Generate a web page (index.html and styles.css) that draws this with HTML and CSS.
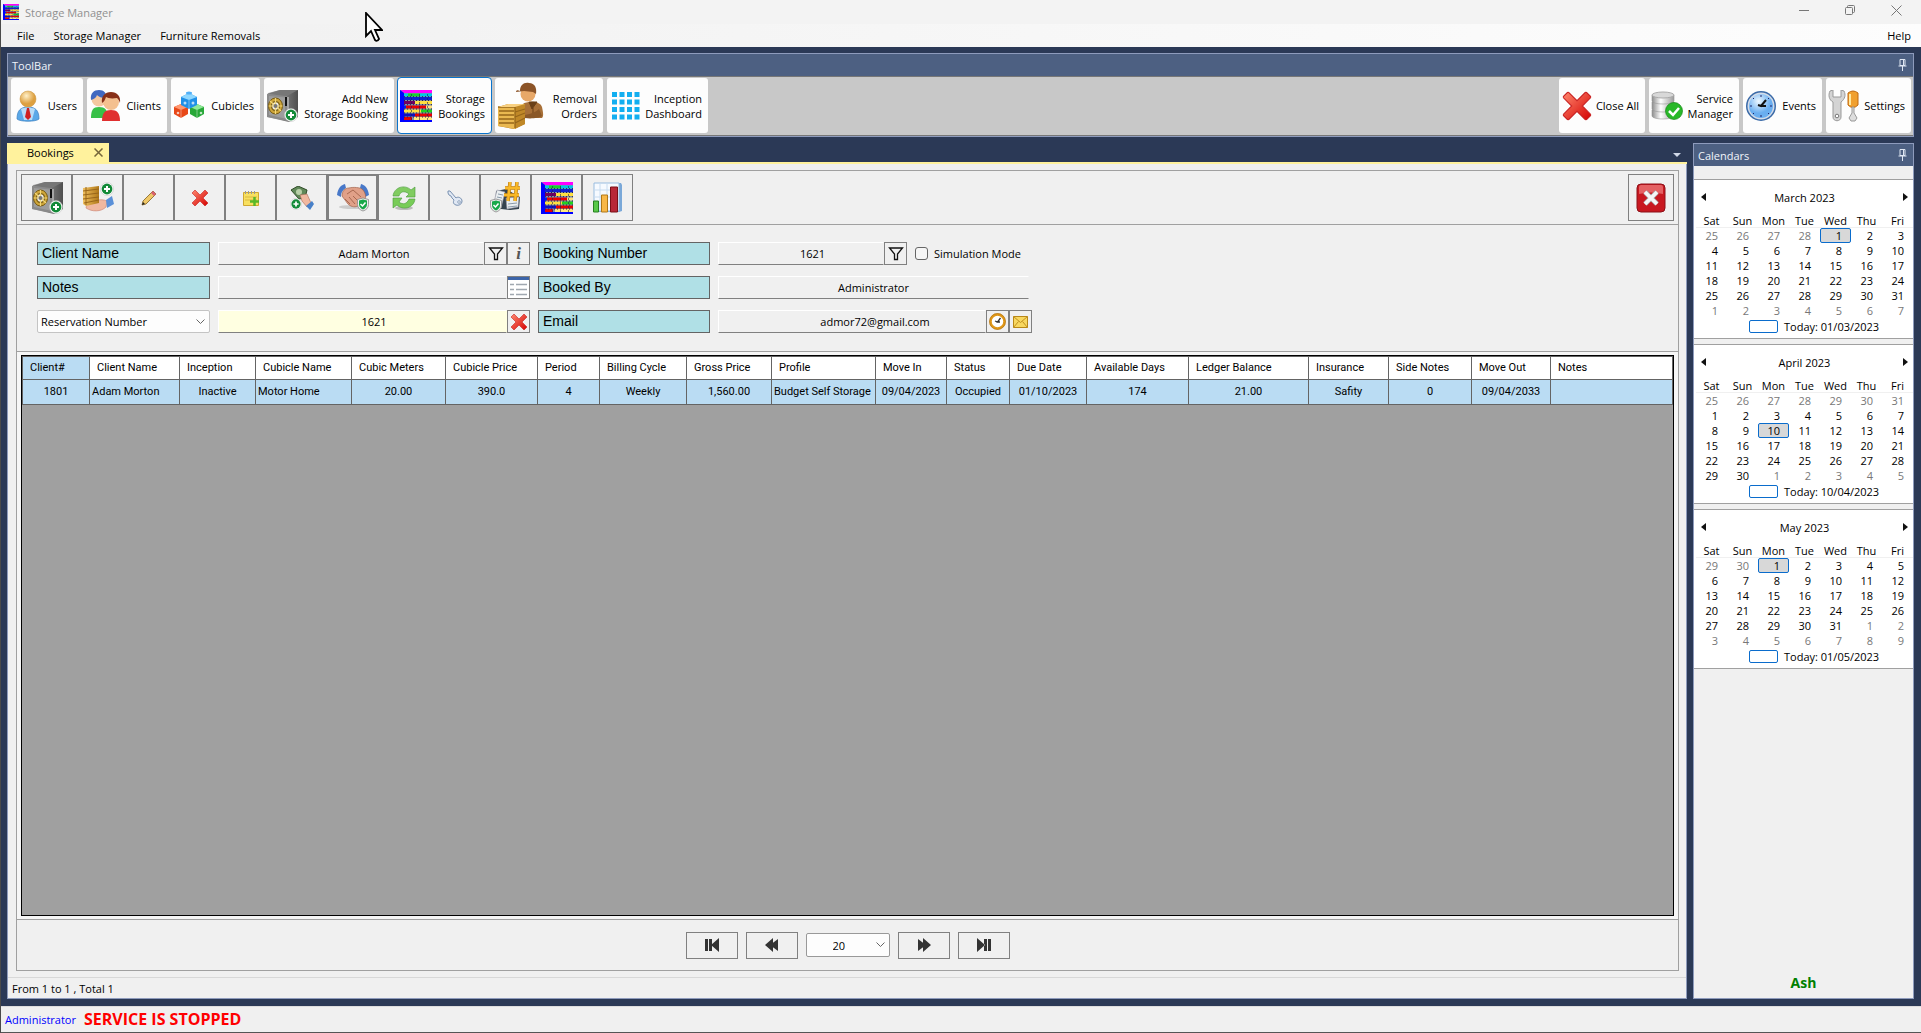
FILE: index.html
```html
<!DOCTYPE html>
<html lang="en">
<head>
<meta charset="utf-8">
<title>Storage Manager</title>
<link rel="stylesheet" href="styles.css">
</head>
<body>
<svg class="defs" aria-hidden="true">
  <defs>
    <linearGradient id="steel" x1="0" x2="1"><stop offset="0" stop-color="#b5b5b5"/><stop offset="1" stop-color="#4e4e4e"/></linearGradient>
    <linearGradient id="redx" x1="0" y1="0" x2="1" y2="1"><stop offset="0" stop-color="#ff8a70"/><stop offset="1" stop-color="#d40000"/></linearGradient>
    <linearGradient id="crate" x1="0" x2="1"><stop offset="0" stop-color="#f0c060"/><stop offset="1" stop-color="#b07818"/></linearGradient>
    <linearGradient id="silver" x1="0" x2="1"><stop offset="0" stop-color="#8c8c8c"/><stop offset=".4" stop-color="#fff"/><stop offset="1" stop-color="#9a9a9a"/></linearGradient>
    <radialGradient id="skin" cx=".4" cy=".3"><stop offset="0" stop-color="#fff0c8"/><stop offset="1" stop-color="#dda040"/></radialGradient>
    <radialGradient id="sky" cx=".4" cy=".3"><stop offset="0" stop-color="#eef8ff"/><stop offset="1" stop-color="#6aaef0"/></radialGradient>
    <symbol id="plus" viewBox="0 0 14 14"><circle cx="7" cy="7" r="6.500" fill="#fff" stroke="#bbb" stroke-width=".5"/><circle cx="7" cy="7" r="5.400" fill="#128a38"/><path d="M7 4v6M4 7h6" stroke="#fff" stroke-width="2"/></symbol>
    <symbol id="shield" viewBox="0 0 12 14"><path d="M6 .5 11.500 2v5c0 3.500-2.500 5.500-5.500 6.500C3 12.500.5 10.500.5 7V2z" fill="#eee" stroke="#888" stroke-width=".8"/><path d="M6 2l4 1v4c0 2.500-2 4-4 5-2-1-4-2.500-4-5V3z" fill="#18a848"/><path d="M3.500 6.500l2 2 3-3.500" stroke="#fff" stroke-width="1.500" fill="none"/></symbol>
    <symbol id="safe" viewBox="0 0 32 32"><path d="M2 3 14 0h18v27l-9 5L1 27z" fill="url(#steel)"/><path d="M1 4 21 6v25L1 27z" fill="#8a8a8a"/><path d="M1 4 14 0h18L21 6z" fill="#777"/><path d="M3 6l16 1.500v21L3 25z" fill="#9d9d9d"/><path d="M20 7v9" stroke="#111" stroke-width="2"/><path d="M22 7v22" stroke="#ddd" stroke-width="1"/><ellipse cx="9.500" cy="16" rx="7" ry="8" fill="#cfa63a" stroke="#765a12"/><ellipse cx="9.500" cy="16" rx="4" ry="4.500" fill="#eee" stroke="#83661a" stroke-width="1.500"/><path d="M9.500 8v16M2.500 16h14M4 11l11 10" stroke="#f3d878" stroke-width="1.200"/><circle cx="9.500" cy="16" r="2" fill="#777"/><use href="#plus" x="18" y="18" width="14" height="14"/></symbol>
    <symbol id="abacus" viewBox="0 0 32 32"><path fill="#8090a8" d="M0 0h32v32H0z"/>
      <g stroke-width="3" fill="none"><path stroke="#00c8e8" d="M4 5h4M20 5h12"/><path stroke="#18d030" d="M8 5h12"/><path stroke="#1020d0" d="M4 8.500h28"/><path stroke="#700060" d="M4 12.500h11"/><path stroke="#ffe040" d="M15 12.500h17"/><path stroke="#0020e0" d="M4 17h2"/><path stroke="#e80000" d="M6 17h20"/><path stroke="#ffe080" d="M26 17h6"/><path stroke="#ffe040" d="M4 21h17"/><path stroke="#20d020" d="M21 21h11"/><path stroke="#1010c0" d="M4 25h11"/><path stroke="#e80000" d="M15 25h17"/><path stroke="#e80000" d="M4 28.500h8"/><path stroke="#ffe880" d="M14 28.500h18"/></g><path d="M4 6.700h28M4 10.500h28M4 14.700h28M4 19h28M4 23h28M4 27h28" stroke="#202050" stroke-width="1" stroke-dasharray="1 2"/><path d="M11.500 4v26M19.500 4v26M27.500 4v26" stroke="#202050" stroke-width=".6" stroke-dasharray="2 2"/><path fill="#f0f" d="M1 0h31v3H4z"/><path fill="#00f" d="M0 0l4 3v27h28v2H0z"/></symbol>
    <symbol id="filter" viewBox="0 0 16 16"><path d="M1.500 2h13l-5 6v5.500h-3V8z" fill="none" stroke="#111" stroke-width="1.300"/></symbol>
    <symbol id="pin" viewBox="0 0 9 12"><path d="M2 .5h5v6H2zM5.500.5v6M.5 7h8M4.500 7v5" fill="none" stroke="#dfe6f2"/></symbol>
    <symbol id="xmark" viewBox="0 0 16 16"><path d="M3 0l5 5 5-5 3 3-5 5 5 5-3 3-5-5-5 5-3-3 5-5-5-5z" fill="url(#redx)" stroke="#c82020" stroke-width=".6"/></symbol>
    <symbol id="prev" viewBox="0 0 5 8"><path d="M5 0v8L0 4z" fill="#111"/></symbol>
    <symbol id="next" viewBox="0 0 5 8"><path d="M0 0v8l5-4z" fill="#111"/></symbol>
  </defs>
</svg>

<div class="app">
  <header class="titlebar">
    <svg class="app-icon" width="16" height="16"><use href="#abacus"/></svg>
    <span class="app-title">Storage Manager</span>
    <div class="window-controls">
      <button aria-label="Minimize"><svg width="11" height="11"><path d="M0 5.500h10" stroke="#777"/></svg></button>
      <button aria-label="Restore"><svg width="11" height="11" fill="none" stroke="#777"><rect x=".5" y="2.500" width="7" height="7" rx="1"/><path d="M2.500 2.500v-1q0-1 1-1h5q1 0 1 1v5q0 1-1 1h-1"/></svg></button>
      <button aria-label="Close"><svg width="11" height="11"><path d="M.5.5l10 10M10.500.5l-10 10" stroke="#777"/></svg></button>
    </div>
  </header>
  <nav class="menubar">
    <a href="#">File</a><a href="#">Storage Manager</a><a href="#">Furniture Removals</a><a href="#" class="menu-help">Help</a>
  </nav>

  <main class="workspace">
    <section class="panel toolbar-panel">
      <h2 class="panel-title">ToolBar <svg width="9" height="12"><use href="#pin"/></svg></h2>
      <div class="toolbar">
        <button class="tool w-72"><svg width="30" height="32" viewBox="0 0 30 32"><path d="M4 29c0-8 3-12 11-12s11 4 11 12c-3 3-19 3-22 0z" fill="#5aa8e8" stroke="#3c80c0" stroke-width=".7"/><path d="M8 19c4-2 10-2 14 0l-3 11h-8z" fill="#b8dcf8"/><path d="M14 18h2l2 9-3 3-3-3z" fill="#d02020"/><circle cx="15" cy="9" r="8" fill="url(#skin)" stroke="#c89038" stroke-width=".5"/></svg><span>Users</span></button>
        <button class="tool w-80"><svg width="32" height="32" viewBox="0 0 32 32"><path d="M2 28c0-8 2-11 8-11s9 3 9 11z" fill="#38c048"/><circle cx="10" cy="9" r="7.500" fill="#f4c8a0"/><path d="M2 10C1 3 5 0 10 0s8 3 7 8c-5 0-7-1-9-3-1 3-3 4-6 5z" fill="#4068c0"/><path d="M13 31c0-8 3-11 9-11s9 3 9 11z" fill="#e03030"/><circle cx="22" cy="12" r="8" fill="#f4c090"/><path d="M13 13c-1-7 3-11 9-11s10 4 9 11c-1-3-2-4-3-5-6 1-9 0-11-1-1 3-2 5-4 6z" fill="#883018"/></svg><span>Clients</span></button>
        <button class="tool w-89"><svg width="32" height="32" viewBox="0 0 32 32"><path d="M1 17l7-3 7 3v7l-7 4-7-4z" fill="#e84818"/><path d="M1 17l7 3 7-3-7-3z" fill="#ff9870"/><path d="M17 17l7-3 7 3v7l-7 4-7-4z" fill="#28a838"/><path d="M17 17l7 3 7-3-7-3z" fill="#90e898"/><path d="M8 7l8-4 8 4v8l-8 4-8-4z" fill="#2090e8"/><path d="M8 7l8 3 8-3-8-4z" fill="#90d8ff"/><path d="M16 10v9M8 20v8M24 20v8" stroke="#fff" stroke-opacity=".4"/><g fill="#fff" opacity=".7"><circle cx="12" cy="13" r="1.500"/><circle cx="20" cy="13" r="1.500"/><circle cx="5" cy="23" r="1.300"/><circle cx="28" cy="23" r="1.300"/></g><ellipse cx="16" cy="3" rx="3" ry="1.500" fill="#50b0f8"/></svg><span>Cubicles</span></button>
        <button class="tool w-130"><svg width="32" height="32"><use href="#safe"/></svg><span>Add New<br>Storage Booking</span></button>
        <button class="tool w-93 is-active"><svg width="32" height="32"><use href="#abacus"/></svg><span>Storage<br>Bookings</span></button>
        <button class="tool w-108"><svg width="48" height="48" viewBox="0 0 48 48"><path d="M26 22c3-3 17-4 19 3 1 5 2 9 0 11H26z" fill="#a87038"/><path d="M32 20l3 7 5-7zM36 26v9" fill="#6a4018" stroke="#6a4018"/><path d="M42 27c-3 3-8 5-14 6v3c6 1 14 0 17-2z" fill="#8a5828"/><circle cx="31" cy="12" r="7.500" fill="#e8a868"/><path d="M23 9c0-6 4-9 9-8 6 0 8 5 7 11l-3-2-9-1-8 1c0-2 2-2 4-1z" fill="#8c5428"/><path d="M1 25l10-3h17v20l-11 5-16-3z" fill="#b87c20"/><path d="M1 25h17v22L1 44z" fill="#eab850"/><path d="M18 25l10-3v20l-10 5z" fill="#c08828"/><path d="M1 25h17v21M2 29h15M2 33h15M2 37h15M2 41h15M18 30l10-3M18 35l10-4M18 41l10-5" stroke="#96661a" fill="none" stroke-width="1.300"/><path d="M1 25l10-3h17l-10 3z" fill="#f8d080"/></svg><span>Removal<br>Orders</span></button>
        <button class="tool w-101"><svg width="32" height="32" viewBox="0 0 32 32"><path d="M5.500 2v28M13 2v28M20.500 2v28M28 2v28" stroke="#12aef0" stroke-width="5" stroke-dasharray="5 2.500"/></svg><span>Inception<br>Dashboard</span></button>
        <div class="tool-spacer"></div>
        <button class="tool w-86"><svg width="32" height="32" viewBox="-1 -1 18 18"><use href="#xmark" width="16" height="16"/></svg><span>Close All</span></button>
        <button class="tool w-90"><svg width="32" height="32" viewBox="0 0 32 32"><g fill="url(#silver)" stroke="#999" stroke-width=".6"><path d="M1 20v6c0 4 22 4 22 0v-6z"/><path d="M1 12v7c0 4 22 4 22 0v-7z"/><path d="M1 5v6c0 4 22 4 22 0V5z"/></g><ellipse cx="12" cy="5" rx="11" ry="3" fill="#d8d8d8" stroke="#aaa"/><circle cx="23" cy="21" r="8.500" fill="#28b828" stroke="#188818" stroke-width=".7"/><path d="M18 21l4 4 6-7" fill="none" stroke="#fff" stroke-width="2.500"/></svg><span>Service<br>Manager</span></button>
        <button class="tool w-79"><svg width="32" height="32" viewBox="0 0 32 32"><circle cx="16" cy="16" r="15" fill="#3a6aa8"/><circle cx="16" cy="16" r="13.500" fill="#d4dce8"/><circle cx="16" cy="16" r="12" fill="url(#sky)"/><path d="M16 5v2M16 25v2M5 16h2M25 16h2M8 8l1 1M24 24l-1-1M8 24l1-1M24 8l-1 1" stroke="#226"/><path d="M21 10l-5 6-3-1M15 16h6" stroke="#111" stroke-width="2" fill="none"/></svg><span>Events</span></button>
        <button class="tool w-85"><svg width="32" height="32" viewBox="0 0 32 32"><path d="M2 1c-2 4-1 9 3 11v15c0 5 8 5 8 0V12c4-3 5-7 3-11l-3-1v7H5V0z" fill="#d4d4d4" stroke="#999"/><circle cx="9" cy="26" r="1.800" fill="#fff" stroke="#777"/><path d="M20 3q5-4 10 0v12q-5 5-10 0z" fill="#f0a030" stroke="#c06810"/><path d="M22 4v11" stroke="#ffe8a0" stroke-width="2"/><path d="M24 17h2v6l3 5-2 3h-4l-2-3 3-5z" fill="#ddd" stroke="#999"/></svg><span>Settings</span></button>
      </div>
    </section>

    <div class="work-row">
      <section class="document">
        <div class="tabstrip">
          <div class="tab">Bookings <button aria-label="Close tab"><svg width="9" height="9"><path d="M.5.5l8 8M8.500.5l-8 8" stroke="#75663a" stroke-width="1.500"/></svg></button></div>
          <button class="tab-menu" aria-label="Open documents"><svg width="8" height="4"><path d="M0 0h8L4 4z" fill="#d0d8e8"/></svg></button>
        </div>
        <div class="document-body">
          <div class="group">
            <div class="actions">
              <button class="action" aria-label="New storage booking"><svg width="32" height="32"><use href="#safe"/></svg></button>
              <button class="action" aria-label="New removal order"><svg width="32" height="32" viewBox="0 0 32 32"><path d="M5 21c5-2 14-5 20-2l-1 6c-5 5-14 5-20 1z" fill="#f0b8a0" stroke="#c88070" stroke-width=".6"/><path d="M24 18l6-4 2 8-7 4z" fill="#5a90d8"/><path d="M1 6l16-2v17l-13 3-3-2z" fill="url(#crate)"/><path d="M1 9l16-2M1 13l16-2M1 17l16-2M2 21l15-3M4 5v18" stroke="#98661a" fill="none"/><use href="#plus" x="18" y="0" width="14" height="14"/></svg></button>
              <button class="action" aria-label="Edit"><svg width="16" height="16" viewBox="0 0 16 16"><path d="M1 15l1-4L12 1l3 3L5 14z" fill="#f0c868" stroke="#806020" stroke-width=".8"/><path d="M12 1l3 3-2 2-3-3z" fill="#d86070"/><path d="M1 15l1-3 2 2z" fill="#222"/></svg></button>
              <button class="action" aria-label="Delete"><svg width="16" height="16"><use href="#xmark"/></svg></button>
              <button class="action" aria-label="Add note"><svg width="16" height="16" viewBox="0 0 16 16"><path d="M.5 2.500h15v13H.5z" fill="#f8e060" stroke="#d0a830"/><path d="M2 7h12M2 10h12" stroke="#d8b840"/><path d="M2.500 1v3M5.500 1v3M8.500 1v3M11.500 1v3" stroke="#999"/><path d="M11.500 7v9M7 11.500h9" stroke="#58b828" stroke-width="2.500"/></svg></button>
              <button class="action" aria-label="Add payment"><svg width="24" height="24" viewBox="0 0 24 24"><path d="M1 4l7-4 9 4-2 8-6 1z" fill="#608858" stroke="#304c28"/><circle cx="9" cy="6" r="3" fill="#b8d0a8"/><path d="M10 9l7-1 4 9-4 4-5-6z" fill="#f0b8a0" stroke="#a86858" stroke-width=".6"/><path d="M16 20l6-5 2 3-4 6z" fill="#4880c8"/><use href="#plus" x="0" y="12" width="12" height="12"/></svg></button>
              <button class="action is-focused" aria-label="Confirm agreement"><svg width="32" height="32" viewBox="0 0 32 32"><ellipse cx="16" cy="25" rx="14" ry="2" fill="#ccc"/><path d="M0 13C1 6 4 3 8 2l1 4c-3 2-5 4-5 9z" fill="#4878c8"/><path d="M32 13C31 6 28 3 24 2l-1 4c3 2 5 4 5 9z" fill="#4878c8"/><path d="M5 14c0-5 3-8 7-8 3-1 12-1 14 2 3 4 3 7 2 10l-7 6c-4 2-8 0-10-2z" fill="#e0a088" stroke="#a06048" stroke-width=".7"/><path d="M10 12l6-4 8 7M8 17l5 5M12 15l6 7M16 14l6 6" fill="none" stroke="#a86850"/><use href="#shield" x="20" y="15" width="12" height="15"/></svg></button>
              <button class="action" aria-label="Refresh"><svg width="24" height="24" viewBox="0 0 24 24"><ellipse cx="12" cy="22" rx="9" ry="2" fill="#bbb"/><path d="M1 10C2 1 13-2 19 4l4-3v10h-9l3-3C12 4 8 6 7 10z" fill="#80cc60" stroke="#48983a" stroke-width=".6"/><path d="M23 13c-1 9-12 12-18 6l-4 3V12h9l-3 4c4 3 8 2 10-3z" fill="#78cc58" stroke="#48983a" stroke-width=".6"/></svg></button>
              <button class="action" aria-label="Access key"><svg width="16" height="16" viewBox="0 0 16 16"><path d="M1 1h2l6 7c2-2 6 0 6 3s-3 5-6 4-3-3-2-5L5 8 4 6 2 5 1 3z" fill="#e0e8f4" stroke="#7890b0"/><circle cx="12" cy="12" r="1.300" fill="#fff" stroke="#7890b0" stroke-width=".8"/></svg></button>
              <button class="action" aria-label="Reservation number"><svg width="32" height="32" viewBox="0 0 32 32"><path d="M6 9l10-2 14 8-1 12-9 1-9-1-6-3z" fill="#34424e"/><path d="M7 8l8 2-4 16-8-2zM16 16l13-1-1 10-11 2z" fill="#eaeef0" stroke="#99a" stroke-width=".6"/><path d="M8 12l5 1M7 15l5 1M6 18l5 1M18 22l9-1M18 25l9-1" stroke="#89a"/><path d="M20 0l-2 19M27 0l-2 19M15 6h15M14 13h15" stroke="#b87810" stroke-width="3.500"/><path d="M20 0l-2 19M27 0l-2 19M15 6h15M14 13h15" stroke="#f8b828" stroke-width="2.300"/><use href="#shield" x="0" y="16" width="12" height="15"/></svg></button>
              <button class="action" aria-label="Storage bookings"><svg width="32" height="32"><use href="#abacus"/></svg></button>
              <button class="action" aria-label="Reports"><svg width="32" height="32" viewBox="0 0 32 32"><path d="M5 1h24l1 2v26l-3 1H5z" fill="#7aa8d8"/><path d="M2 1h25v28H2z" fill="#f6faff" stroke="#98bce0"/><path d="M2 8h25M2 15h25M8 1v28M15 1v28" stroke="#c8dcf0"/><path d="M1.500 19h5v11h-5z" fill="#58c848" stroke="#288020"/><path d="M9.500 13h6v17h-6z" fill="#f8b848" stroke="#b07818"/><path d="M18.500 5h7v25h-7z" fill="#b82838" stroke="#7a1018"/></svg></button>
              <button class="action action-close" aria-label="Close bookings"><svg width="30" height="30" viewBox="0 0 30 30"><rect x="1" y="1" width="28" height="28" rx="4" fill="#c81820" stroke="#8c1018"/><path d="M3 4q0-2 2-2h20q2 0 2 2v7q-12-3-24 0z" fill="#f08080" opacity=".7"/><path d="M9 9l12 12M21 9L9 21" stroke="#a8a8a8" stroke-width="5"/><path d="M9 9l12 12M21 9L9 21" stroke="#f6f6f6" stroke-width="3.500"/></svg></button>
            </div>

            <form class="filters">
              <label class="caption" for="client">Client Name</label>
              <div class="field"><input id="client" class="beside-two" value="Adam Morton"><button type="button" aria-label="Filter client"><svg width="16" height="16"><use href="#filter"/></svg></button><button type="button" class="info" aria-label="Client information">i</button></div>
              <label class="caption" for="number">Booking Number</label>
              <div class="field"><input id="number" class="short beside-one" value="1621"><button type="button" aria-label="Filter booking"><svg width="16" height="16"><use href="#filter"/></svg></button><label class="check"><input type="checkbox">Simulation Mode</label></div>

              <label class="caption" for="notes">Notes</label>
              <div class="field"><input id="notes" value=""><button type="button" aria-label="Open notes"><svg width="21" height="21" viewBox="0 0 21 21"><path fill="#fff" d="M0 0h21v21H0z"/><path fill="#3c64a8" d="M0 0h21v3H0z"/><path d="M2 7.500h4M8 7.500h11M2 12.500h4M8 12.500h11M2 17.500h4M8 17.500h11" stroke="#a0a8b0" stroke-width="1.500"/></svg></button></div>
              <label class="caption" for="booked">Booked By</label>
              <div class="field"><input id="booked" class="inset" value="Administrator"></div>

              <select class="kind" aria-label="Search by"><option>Reservation Number</option></select>
              <div class="field"><input class="yellow beside-one" aria-label="Reservation Number" value="1621"><button type="button" aria-label="Clear"><svg width="16" height="16"><use href="#xmark"/></svg></button></div>
              <label class="caption" for="email">Email</label>
              <div class="field"><input id="email" class="beside-two" value="admor72@gmail.com"><button type="button" aria-label="Schedule"><svg width="17" height="17" viewBox="0 0 17 17"><circle cx="8.500" cy="8.500" r="7" fill="#fff" stroke="#e09818" stroke-width="2.500"/><circle cx="8.500" cy="8.500" r="8" fill="none" stroke="#a86808" stroke-width=".6"/><path d="M11.500 5l-3 4H11M8.500 9L6 8" fill="none" stroke="#333" stroke-width="1.300"/></svg></button><button type="button" aria-label="Send email"><svg width="15" height="12" viewBox="0 0 15 12"><path d="M.5.5h14v11H.5z" fill="#f8d860" stroke="#b88818"/><path d="M.5.5l7 6 7-6M.5 11.500l5-6M14.500 11.500l-5-6" fill="none" stroke="#c09020"/></svg></button></div>
            </form>

            <div class="grid-area">
              <div class="grid-box">
                <table class="bookings">
                  <colgroup><col class="c67"><col class="c90"><col class="c76"><col class="c96"><col class="c94"><col class="c92"><col class="c62"><col class="c87"><col class="c85"><col class="c104"><col class="c71"><col class="c63"><col class="c77"><col class="c102"><col class="c120"><col class="c80"><col class="c83"><col class="c79"><col></colgroup>
                  <thead><tr><th class="sorted">Client#</th><th>Client Name</th><th>Inception</th><th>Cubicle Name</th><th>Cubic Meters</th><th>Cubicle Price</th><th>Period</th><th>Billing Cycle</th><th>Gross Price</th><th>Profile</th><th>Move In</th><th>Status</th><th>Due Date</th><th>Available Days</th><th>Ledger Balance</th><th>Insurance</th><th>Side Notes</th><th>Move Out</th><th>Notes</th></tr></thead>
                  <tbody><tr><td>1801</td><td class="left">Adam Morton</td><td>Inactive</td><td class="left">Motor Home</td><td>20.00</td><td>390.0</td><td>4</td><td>Weekly</td><td>1,560.00</td><td class="left">Budget Self Storage</td><td>09/04/2023</td><td>Occupied</td><td>01/10/2023</td><td>174</td><td>21.00</td><td>Safity</td><td>0</td><td>09/04/2033</td><td></td></tr></tbody>
                </table>
              </div>
            </div>

            <div class="pager">
              <button aria-label="First page"><svg width="14" height="14"><path d="M0 1h3v12H0zM4 1h3v12H4zM14 0v14L6 7z" fill="#333"/></svg></button>
              <button aria-label="Previous page"><svg width="14" height="14"><path d="M8 0v14L0 7zM13 1v12L5 7z" fill="#333"/></svg></button>
              <select aria-label="Rows per page"><option>20</option></select>
              <button aria-label="Next page"><svg width="14" height="14"><path d="M6 0v14l8-7zM1 1v12l8-6z" fill="#333"/></svg></button>
              <button aria-label="Last page"><svg width="14" height="14"><path d="M11 1h3v12h-3zM7 1h3v12H7zM0 0v14l8-7z" fill="#333"/></svg></button>
            </div>
          </div>
          <div class="record-count">From 1 to 1 , Total 1</div>
        </div>
      </section>

      <aside class="panel calendars">
        <h2 class="panel-title">Calendars <svg width="9" height="12"><use href="#pin"/></svg></h2>
        <div class="calendar-list">
          <section class="calendar">
            <div class="month"><button aria-label="Previous month"><svg width="5" height="8"><use href="#prev"/></svg></button>March 2023<button aria-label="Next month"><svg width="5" height="8"><use href="#next"/></svg></button></div>
            <table>
              <thead><tr><th>Sat</th><th>Sun</th><th>Mon</th><th>Tue</th><th>Wed</th><th>Thu</th><th>Fri</th></tr></thead>
              <tbody>
                <tr><td class="out">25</td><td class="out">26</td><td class="out">27</td><td class="out">28</td><td class="day">1</td><td>2</td><td>3</td></tr>
                <tr><td>4</td><td>5</td><td>6</td><td>7</td><td>8</td><td>9</td><td>10</td></tr>
                <tr><td>11</td><td>12</td><td>13</td><td>14</td><td>15</td><td>16</td><td>17</td></tr>
                <tr><td>18</td><td>19</td><td>20</td><td>21</td><td>22</td><td>23</td><td>24</td></tr>
                <tr><td>25</td><td>26</td><td>27</td><td>28</td><td>29</td><td>30</td><td>31</td></tr>
                <tr class="out"><td>1</td><td>2</td><td>3</td><td>4</td><td>5</td><td>6</td><td>7</td></tr>
              </tbody>
            </table>
            <div class="today"><i></i>Today: 01/03/2023</div>
          </section>
          <section class="calendar">
            <div class="month"><button aria-label="Previous month"><svg width="5" height="8"><use href="#prev"/></svg></button>April 2023<button aria-label="Next month"><svg width="5" height="8"><use href="#next"/></svg></button></div>
            <table>
              <thead><tr><th>Sat</th><th>Sun</th><th>Mon</th><th>Tue</th><th>Wed</th><th>Thu</th><th>Fri</th></tr></thead>
              <tbody>
                <tr class="out"><td>25</td><td>26</td><td>27</td><td>28</td><td>29</td><td>30</td><td>31</td></tr>
                <tr><td>1</td><td>2</td><td>3</td><td>4</td><td>5</td><td>6</td><td>7</td></tr>
                <tr><td>8</td><td>9</td><td class="day">10</td><td>11</td><td>12</td><td>13</td><td>14</td></tr>
                <tr><td>15</td><td>16</td><td>17</td><td>18</td><td>19</td><td>20</td><td>21</td></tr>
                <tr><td>22</td><td>23</td><td>24</td><td>25</td><td>26</td><td>27</td><td>28</td></tr>
                <tr><td>29</td><td>30</td><td class="out">1</td><td class="out">2</td><td class="out">3</td><td class="out">4</td><td class="out">5</td></tr>
              </tbody>
            </table>
            <div class="today"><i></i>Today: 10/04/2023</div>
          </section>
          <section class="calendar">
            <div class="month"><button aria-label="Previous month"><svg width="5" height="8"><use href="#prev"/></svg></button>May 2023<button aria-label="Next month"><svg width="5" height="8"><use href="#next"/></svg></button></div>
            <table>
              <thead><tr><th>Sat</th><th>Sun</th><th>Mon</th><th>Tue</th><th>Wed</th><th>Thu</th><th>Fri</th></tr></thead>
              <tbody>
                <tr><td class="out">29</td><td class="out">30</td><td class="day">1</td><td>2</td><td>3</td><td>4</td><td>5</td></tr>
                <tr><td>6</td><td>7</td><td>8</td><td>9</td><td>10</td><td>11</td><td>12</td></tr>
                <tr><td>13</td><td>14</td><td>15</td><td>16</td><td>17</td><td>18</td><td>19</td></tr>
                <tr><td>20</td><td>21</td><td>22</td><td>23</td><td>24</td><td>25</td><td>26</td></tr>
                <tr><td>27</td><td>28</td><td>29</td><td>30</td><td>31</td><td class="out">1</td><td class="out">2</td></tr>
                <tr class="out"><td>3</td><td>4</td><td>5</td><td>6</td><td>7</td><td>8</td><td>9</td></tr>
              </tbody>
            </table>
            <div class="today"><i></i>Today: 01/05/2023</div>
          </section>
        </div>
        <div class="user-name">Ash</div>
      </aside>
    </div>
  </main>

  <footer class="statusbar"><span class="role">Administrator</span><strong>SERVICE IS STOPPED</strong></footer>
  <svg class="cursor" width="18" height="30" viewBox="0 0 18 30"><path d="M1 1v23l5-5 4 9q2 2 4-1l-4-9h7z" fill="#fff" stroke="#000" stroke-width="1.800"/></svg>
</div>
</body>
</html>
```

FILE: styles.css
```css
* { box-sizing: border-box; }

body {
  margin: 0;
  font: 11px/15px "Open Sans", "Noto Sans", sans-serif;
  color: #000;
}

button, input, select { font: inherit; color: inherit; margin: 0; padding: 0; border-radius: 0; }
button { background: none; border: 0; display: inline-flex; align-items: center; justify-content: center; }
svg { display: block; flex: none; }
.defs { position: absolute; width: 0; height: 0; }

.app {
  position: relative;
  min-height: 100vh;
  display: flex;
  flex-direction: column;
  background: #f0f0f0;
  border-left: 1px solid #4a4a4a;
}

.titlebar { display: flex; align-items: center; height: 24px; background: #f3f3f3; padding-left: 2px; }
.app-title { color: #909090; margin-left: 6px; }
.window-controls { margin-left: auto; display: flex; height: 20px; align-self: flex-start; }
.window-controls button { width: 46px; }
.window-controls button:last-child { margin-right: 2px; }

.menubar { display: flex; align-items: center; height: 23px; padding: 0 10px 0 16px; gap: 19px; background: linear-gradient(90deg, #f0f0f0, #fdfdfd); }
.menubar a { color: #000; text-decoration: none; }
.menu-help { margin-left: auto; }

.workspace { flex: 1; display: flex; flex-direction: column; gap: 6px; padding: 6px 7px 7px 6px; background: #2b3956; }

.panel { border: 1px solid #8e9bbc; }
.panel-title {
  display: flex; justify-content: space-between; align-items: center;
  height: 22px; margin: 0; padding: 0 6px 0 4px;
  background: #4d6082; color: #f0f4fa;
  font-size: 11px; font-weight: 400;
}

.toolbar { display: flex; gap: 4px; padding: 1px 2px 2px 3px; background: #c8c8c8; border-top: 1px solid #777; border-bottom: 1px solid #777; }
.tool {
  height: 55px; padding: 0 6px 0 2px;
  justify-content: space-between;
  background: #fdfdfd; border-radius: 3px;
  text-align: right; white-space: nowrap;
}
.tool.is-active { outline: 1px solid #0a74cc; }
.tool-spacer { flex: 1; }
.w-72 { width: 72px; } .w-79 { width: 79px; } .w-80 { width: 80px; } .w-85 { width: 85px; }
.w-86 { width: 86px; } .w-89 { width: 89px; } .w-90 { width: 90px; } .w-93 { width: 93px; }
.w-101 { width: 101px; } .w-108 { width: 108px; } .w-130 { width: 130px; }

.work-row { flex: 1; display: flex; gap: 6px; }
.document { flex: 1; min-width: 0; display: flex; flex-direction: column; }
.tabstrip { display: flex; justify-content: space-between; height: 21px; border-bottom: 2px solid #fff29d; }
.tab { display: flex; justify-content: space-between; align-items: center; width: 102px; padding: 0 6px 0 20px; background: #fff29d; }
.tab-menu { padding: 4px 6px 0; }

.document-body { flex: 1; display: flex; flex-direction: column; padding: 6px 7px 0 8px; background: #f0f0f0; border: 1px solid #8e9bbc; border-top: 0; }
.group { flex: 1; display: flex; flex-direction: column; border: 1px solid #a0a0a0; }

.actions { display: flex; padding: 3px 4px; border-bottom: 1px solid #a0a0a0; }
.action { width: 51px; height: 47px; border: 1px solid #808080; }
.action.is-focused { border-width: 2px; }
.action-close { width: 46px; margin-left: auto; }

.filters {
  display: grid;
  grid-template-columns: 173px 312px 172px 314px;
  grid-auto-rows: 23px;
  gap: 11px 8px;
  padding: 17px 20px 18px;
}
.caption { border: 1px solid #646464; background: #b0e0e6; padding: 0 4px; font: 14px/21px "Liberation Sans", Arial, sans-serif; }
.field { display: flex; }
.field > input {
  flex: 1; min-width: 0; text-align: center; background: #f0f0f0;
  border: 1px solid; border-color: #fff #f0f0f0 #808080 #fff;
}
.field > input.beside-one { padding-left: 23px; }
.field > input.beside-two { padding-left: 46px; }
.field > input.short { flex: 0 0 166px; }
.field > input.yellow { background: #ffffe1; border-color: #fff #ffffe1 #808080 #fff; }
.field > input.inset { margin-right: 3px; }
.field > button { width: 23px; border: 1px solid #808080; }
.field > .info { font: italic bold 17px/20px "Liberation Serif", serif; color: #555; }
.check { display: flex; align-items: center; gap: 6px; margin-left: 8px; }
.check input { appearance: none; width: 13px; height: 13px; border: 1px solid #666; border-radius: 3px; background: #f6f6f6; }

select {
  appearance: none;
  border: 1px solid #c4c4c4;
  border-radius: 2px;
  background: #fdfdfd url("data:image/svg+xml,%3Csvg xmlns='http://www.w3.org/2000/svg' width='9' height='6'%3E%3Cpath d='M.5.5l4 4 4-4' fill='none' stroke='%23666'/%3E%3C/svg%3E") no-repeat right 4px center;
}
.kind { padding-left: 3px; }

.grid-area { flex: 1; display: flex; padding: 3px 4px; border: solid #a0a0a0; border-width: 1px 0; background: #f6f6f6; }
.grid-box { flex: 1; min-width: 0; background: #a0a0a0; border: 1px solid #000; }
.bookings { width: 100%; table-layout: fixed; border-collapse: collapse; font: 11px/14px Roboto, "Noto Sans", sans-serif; white-space: nowrap; }
.bookings th, .bookings td { border: 1px solid #646464; padding: 0; overflow: visible; }
.bookings th { height: 23px; padding-left: 7px; background: #fff; font-weight: 400; text-align: left; }
.bookings th.sorted, .bookings td { background: #badcf3; }
.bookings td { height: 25px; text-align: center; }
.bookings td.left { padding-left: 2px; text-align: left; }
.c62 { width: 62px; } .c63 { width: 63px; } .c67 { width: 67px; } .c71 { width: 71px; } .c76 { width: 76px; }
.c77 { width: 77px; } .c79 { width: 79px; } .c80 { width: 80px; } .c83 { width: 83px; } .c85 { width: 85px; }
.c87 { width: 87px; } .c90 { width: 90px; } .c92 { width: 92px; } .c94 { width: 94px; } .c96 { width: 96px; }
.c102 { width: 102px; } .c104 { width: 104px; } .c120 { width: 120px; }

.pager { display: flex; align-items: center; justify-content: center; gap: 8px; height: 50px; }
.pager button { width: 52px; height: 27px; border: 1px solid #808080; }
.pager select { width: 84px; height: 24px; padding: 0 28px 0 26px; border-color: #999; }

.record-count { height: 21px; margin: 6px -7px 0 -8px; padding: 3px 4px; border-top: 1px solid #d8d8d8; }

.calendars { width: 221px; display: flex; flex-direction: column; background: #f0f0f0; }
.calendar-list { display: flex; flex-direction: column; gap: 5px; padding-top: 13px; }
.calendar { height: 160px; background: #fff; border: solid #a0a0a0; border-width: 1px 0; }
.month { display: flex; align-items: center; justify-content: space-between; height: 34px; padding: 0 5px 0 7px; }
.calendar table { width: 100%; padding: 0 0 0 2px; table-layout: fixed; border-spacing: 0; }
.calendar th, .calendar td { padding: 0 8px 0 0; height: 15px; line-height: 13px; text-align: right; border: 1px solid transparent; }
.calendar th { padding: 0; height: 14px; line-height: 12px; font-weight: 400; text-align: center; border: 0; border-bottom: 1px solid #f0f0f0; }
.calendar .out { color: #777; }
.calendar td.day { background: #d8d8d8; border-color: #0a6ccc; border-radius: 2px; }
.today { display: flex; align-items: center; gap: 6px; height: 17px; padding-left: 55px; }
.today i { width: 29px; height: 13px; border: 1px solid #0a6ccc; border-radius: 2px; }
.user-name { margin: auto 0 6px; text-align: center; color: #008000; font-size: 14px; font-weight: 700; line-height: 18px; }

.statusbar { display: flex; align-items: center; gap: 8px; height: 27px; padding-left: 4px; border-top: 1px solid #ddd; border-bottom: 1px solid #555; }
.role { color: #00f; }
.statusbar strong { color: #f00; font-size: 16px; }

.cursor { position: absolute; left: 364px; top: 12px; }
```
